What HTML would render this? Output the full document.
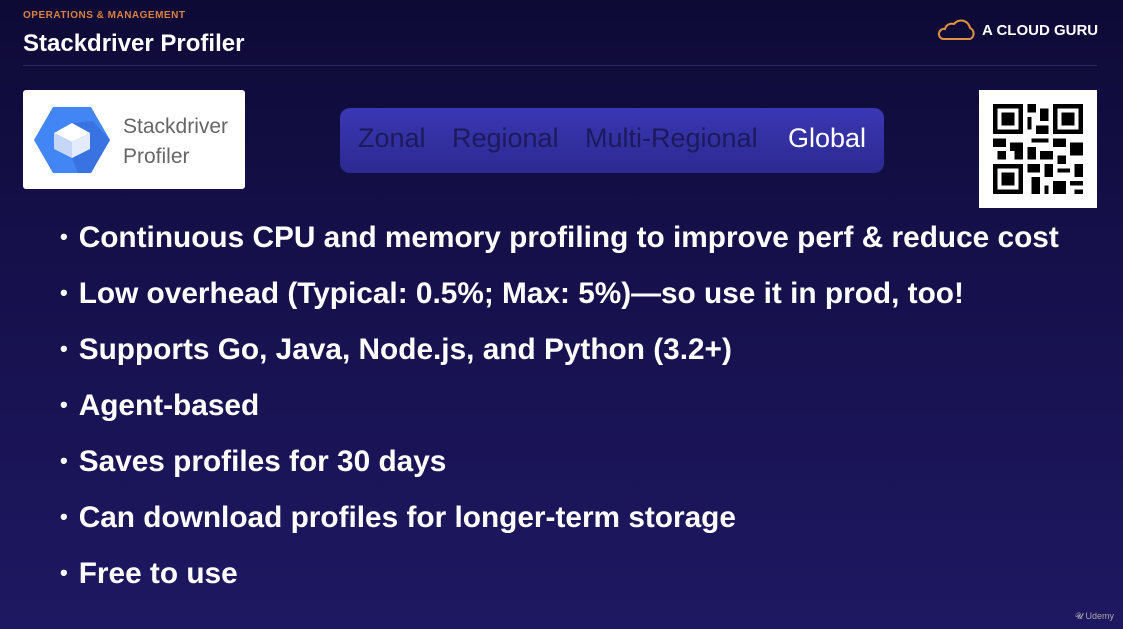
<!DOCTYPE html>
<html><head><meta charset="utf-8"><style>
body{margin:0;width:1123px;height:629px;overflow:hidden;background:linear-gradient(180deg,#0e0a36 0%,#15104a 40%,#1e1862 100%);font-family:"Liberation Sans",sans-serif;position:relative}
.a{position:absolute}
.cat{left:23px;top:10px;color:#d9823f;font-size:10px;font-weight:bold;letter-spacing:.5px}
.title{left:23px;top:30px;color:#fff;font-size:24px;font-weight:bold}
.hr{left:23px;top:65px;width:1074px;height:1px;background:#2a2660}
.logo{left:23px;top:90px;width:222px;height:99px;background:#fff;border-radius:3px}
.pill{left:340px;top:108px;width:544px;height:65px;border-radius:10px;background:linear-gradient(180deg,#3a37b4,#2c2a90);}
.pill span{position:absolute;top:15px;font-size:27px;color:#1c1a5a}
ul{position:absolute;left:60px;top:215px;margin:0;padding:0;list-style:none}
li{color:#fff;font-weight:bold;font-size:29.8px;height:56px;line-height:44px;white-space:nowrap}
li:before{content:"•";margin-right:11px;font-size:22px;vertical-align:3px}
</style></head><body>
<div class="a cat">OPERATIONS &amp; MANAGEMENT</div>
<div class="a title">Stackdriver Profiler</div>
<div class="a" style="left:937px;top:19px"><svg width="40" height="22" viewBox="0 0 40 22"><path d="M6 20 H33 A6 6 0 0 0 33 9 A9 9 0 0 0 17 5 A7 7 0 0 0 8 10 A5 5 0 0 0 6 20Z" fill="none" stroke="#e0913f" stroke-width="2"/></svg></div>
<div class="a" style="left:982px;top:22px;color:#fff;font-weight:bold;font-size:15px">A CLOUD GURU</div>
<div class="a hr"></div>
<div class="a logo">
<svg class="a" style="left:10px;top:16px" width="78" height="68" viewBox="0 0 78 68"><polygon points="20,1 58,1 77,34 58,67 20,67 1,34" fill="#4285f4"/><polygon points="39,17 57,27 57,43 39,52 45,67 58,67 77,34 60,15" fill="#3367d6" opacity=".6"/><polygon points="39,17 57,27 39,36 21,27" fill="#fff"/><polygon points="21,27 39,36 39,52 21,43" fill="#c6d6f7"/><polygon points="39,36 57,27 57,43 39,52" fill="#e3ebfc"/></svg>
<div class="a" style="left:100px;top:22px;color:#666;font-size:21px;line-height:30px">Stackdriver<br>Profiler</div>
</div>
<div class="a pill"><span style="left:18px">Zonal</span><span style="left:112px">Regional</span><span style="left:245px">Multi-Regional</span><span style="left:448px;color:#fff">Global</span></div>
<div class="a" style="left:979px;top:90px;width:118px;height:118px;background:#fff">
<svg class="a" style="left:14px;top:14px" width="90" height="90" viewBox="0 0 21 21" shape-rendering="crispEdges">
<g fill="#000"><path d="M0 0h7v7H0zM14 0h7v7h-7zM0 14h7v7H0z"/></g>
<g fill="#fff"><path d="M1 1h5v5H1zM15 1h5v5h-5zM1 15h5v5H1z"/></g>
<g fill="#000"><path d="M2 2h3v3H2zM16 2h3v3h-3zM2 16h3v3H2z"/>
<path d="M8 0h2v2H8zM11 1h2v3h-2zM8 3h1v3H8zM10 5h3v2h-3zM9 8h4v1H9zM0 8h3v2H0zM4 9h3v2H4zM14 8h3v2h-3zM18 9h3v3h-3zM1 11h2v2H1zM8 10h2v3H8zM11 11h3v2h-3zM15 12h2v2h-2zM8 14h3v2H8zM12 14h2v3h-2zM15 15h3v1h-3zM19 14h2v3h-2zM9 17h2v4H9zM14 18h3v3h-3zM18 18h3v1h-3zM19 20h2v1h-2zM12 19h1v2h-1zM5 11h2v2H5z"/></g>
</svg></div>
<ul>
<li>Continuous CPU and memory profiling to improve perf &amp; reduce cost</li>
<li>Low overhead (Typical: 0.5%; Max: 5%)—so use it in prod, too!</li>
<li>Supports Go, Java, Node.js, and Python (3.2+)</li>
<li>Agent-based</li>
<li>Saves profiles for 30 days</li>
<li>Can download profiles for longer-term storage</li>
<li>Free to use</li>
</ul>
<div class="a" style="left:1075px;top:611px;color:#aaa;font-size:9px">𝓤 Udemy</div>
</body></html>
